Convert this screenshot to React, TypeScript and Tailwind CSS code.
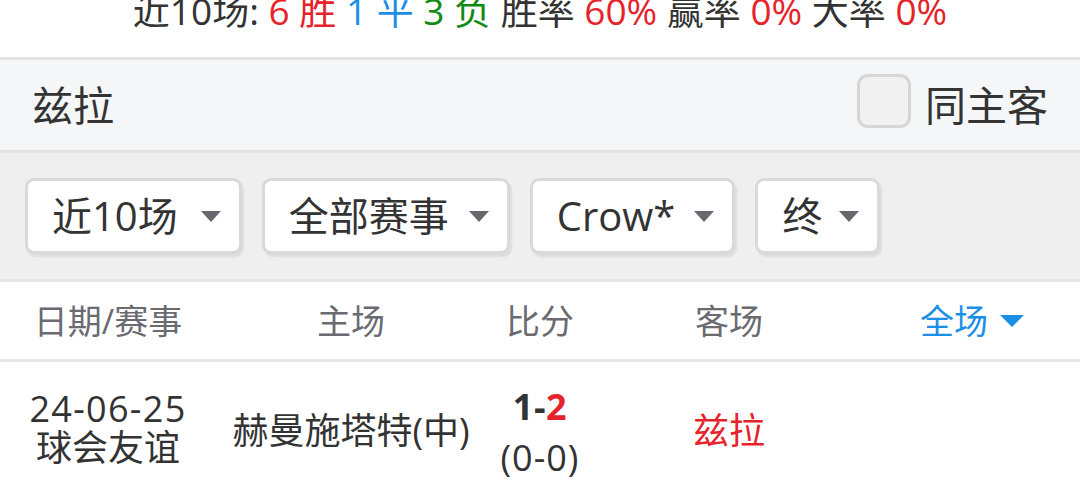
import React from "react";

const FONT = { fontFamily: "'Open Sans', 'Noto Sans CJK SC', sans-serif" };

function Tri({ color = "#666870", w = 20, h = 11 }: { color?: string; w?: number; h?: number }) {
  return (
    <svg width={w} height={h} viewBox={`0 0 ${w} ${h}`} className="shrink-0">
      <polygon points={`0,0 ${w},0 ${w / 2},${h}`} fill={color} />
    </svg>
  );
}

function FilterBtn({ label, gap = "gap-[23px]" }: { label: string; gap?: string }) {
  return (
    <div
      className={`h-[76px] flex items-center ${gap} pl-[24px] pr-[18px] bg-white border-[3px] border-[#d9d9d9] rounded-[9px] shadow-[2px_3px_2px_rgba(0,0,0,0.08)] text-[40px] text-[#333]`}
    >
      <span className="leading-none">{label}</span>
      <Tri />
    </div>
  );
}

export default function App() {
  return (
    <div className="w-[1080px] h-[488px] overflow-hidden bg-white" style={FONT}>
      {/* top summary */}
      <div className="h-[57px] overflow-hidden flex justify-center">
        <div className="text-[37px] leading-[37px] mt-[-8px] text-[#333] whitespace-pre">
          <span>近10场: </span>
          <span className="text-[#e6232b]">6 胜 </span>
          <span className="text-[#1a8fe6]">1 平 </span>
          <span className="text-[#118a14]">3 负 </span>
          <span>胜率 </span>
          <span className="text-[#e6232b]">60% </span>
          <span>赢率 </span>
          <span className="text-[#e6232b]">0% </span>
          <span>大率 </span>
          <span className="text-[#e6232b]">0%</span>
        </div>
      </div>
      <div className="h-[3px] bg-[#e3e3e3]" />
      {/* team header */}
      <div className="h-[90px] bg-[#f5f6f8] flex items-center justify-between pl-[32px] pr-[32px]">
        <span className="text-[41px] leading-none text-[#333]">兹拉</span>
        <div className="flex items-center gap-[14px]">
          <div className="w-[54px] h-[54px] mb-[8px] rounded-[11px] border-[3px] border-[#d6d6d6] bg-[#f1f1f1]" />
          <span className="text-[41px] leading-none text-[#333]">同主客</span>
        </div>
      </div>
      <div className="h-[3px] bg-[#e3e3e3]" />
      {/* filters */}
      <div className="h-[126px] bg-[#efefef] flex items-center gap-[20px] pl-[25px]">
        <FilterBtn label="近10场" />
        <FilterBtn label="全部赛事" gap="gap-[20px]" />
        <FilterBtn label="Crow*" gap="gap-[19px]" />
        <FilterBtn label="终" gap="gap-[17px]" />
      </div>
      <div className="h-[3px] bg-[#e6e6e6]" />
      {/* table header */}
      <div className="h-[77px] flex items-center text-[34px] leading-none text-[#6a6a70]">
        <div className="w-[216px] text-center">日期/赛事</div>
        <div className="w-[270px] text-center">主场</div>
        <div className="w-[108px] text-center">比分</div>
        <div className="w-[270px] text-center">客场</div>
        <div className="w-[216px] flex justify-center items-center gap-[12px] text-[#1a8fe6]">
          <span>全场</span>
          <Tri color="#1a8fe6" w={24} h={12} />
        </div>
      </div>
      <div className="h-[3px] bg-[#e6e6e6]" />
      {/* data row */}
      <div className="h-[126px] flex items-center text-[36px] text-[#333]">
        <div className="w-[216px] flex flex-col items-center leading-[39px] mt-[5px]">
          <span className="tracking-[1.3px]">24-06-25</span>
          <span>球会友谊</span>
        </div>
        <div className="w-[270px] text-center leading-none mt-[12px]">赫曼施塔特(中)</div>
        <div className="w-[108px] flex flex-col items-center mt-[13px]">
          <span className="font-bold leading-[51px] tracking-[0.5px]">
            1-<span className="text-[#e6232b]">2</span>
          </span>
          <span className="leading-[51px] tracking-[1px]">(0-0)</span>
        </div>
        <div className="w-[270px] text-center leading-none text-[#e6232b] mt-[12px]">兹拉</div>
        <div className="w-[216px]" />
      </div>
    </div>
  );
}
